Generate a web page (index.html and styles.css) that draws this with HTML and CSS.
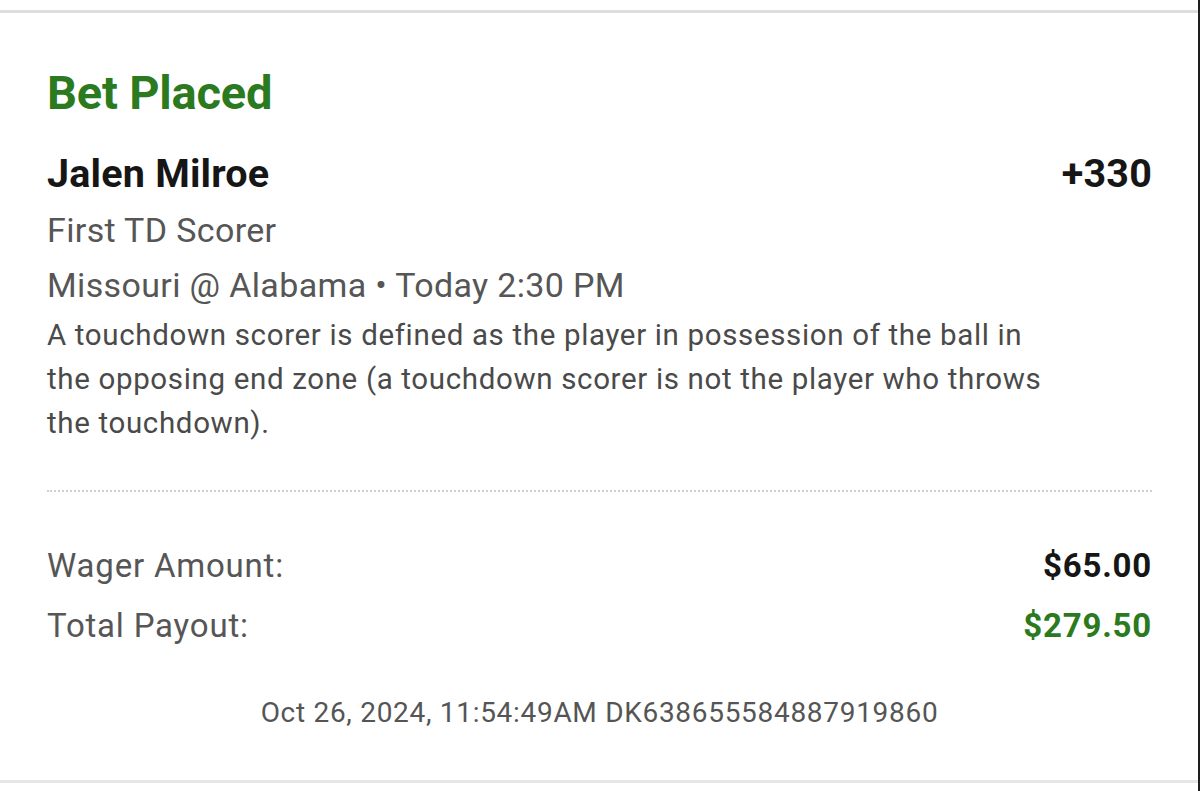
FILE: index.html
```html
<!DOCTYPE html>
<html lang="en">
<head>
<meta charset="utf-8">
<title>Bet Placed</title>
<link rel="stylesheet" href="styles.css">
</head>
<body>
<div class="screen">
  <div class="rule"></div>
  <div class="card">
    <h1 class="title">Bet Placed</h1>
    <div class="row pick">
      <span class="player">Jalen Milroe</span>
      <span class="odds">+330</span>
    </div>
    <div class="meta">First TD Scorer</div>
    <div class="meta">Missouri @ Alabama • Today 2:30 PM</div>
    <p class="desc">A touchdown scorer is defined as the player in possession of the ball in the opposing end zone (a touchdown scorer is not the player who throws the touchdown).</p>
    <div class="dots"></div>
    <div class="row amount">
      <span class="label">Wager Amount:</span>
      <span class="value">$65.00</span>
    </div>
    <div class="row amount">
      <span class="label">Total Payout:</span>
      <span class="value green">$279.50</span>
    </div>
    <div class="footer">Oct 26, 2024, 11:54:49AM DK638655584887919860</div>
  </div>
  <div class="rule bottom"></div>
  <div class="scroll-mark"></div>
</div>
</body>
</html>
```
FILE: styles.css
```css
html, body {
  margin: 0;
  padding: 0;
  background: #fff;
}
.screen {
  position: relative;
  box-sizing: border-box;
  width: 1200px;
  height: 791px;
  overflow: hidden;
  border-right: 2px solid #1e1e1e;
  font-family: Roboto, "Liberation Sans", sans-serif;
  background: #fff;
}
.rule {
  margin-top: 10px;
  height: 3px;
  background: #dedede;
}
.rule.bottom {
  margin-top: 47px;
  background: #e6e6e6;
}
.card {
  padding: 0 46px 0 47px;
}
.title {
  margin: 52px 0 0 0;
  font-size: 47px;
  line-height: 56px;
  letter-spacing: -0.2px;
  font-weight: 700;
  color: #2b7a1f;
}
.row {
  display: flex;
  justify-content: space-between;
  align-items: baseline;
}
.pick {
  margin-top: 31px;
  font-size: 39.5px;
  line-height: 44px;
  letter-spacing: 0.2px;
  font-weight: 700;
  color: #161616;
}
.meta {
  font-size: 34px;
  line-height: 55px;
  letter-spacing: 0.35px;
  color: #565656;
}
.pick + .meta {
  margin-top: 7px;
}
.desc {
  margin: 0;
  max-width: 1010px;
  font-size: 29.5px;
  line-height: 44px;
  letter-spacing: 0.65px;
  color: #4a4a4a;
}
.dots {
  margin-top: 45px;
  height: 0;
  border-top: 2px dotted #cfcfcf;
}
.amount {
  font-size: 33px;
  line-height: 60px;
  letter-spacing: 0.8px;
}
.dots + .amount {
  margin-top: 44px;
}
.label {
  color: #565656;
}
.value {
  font-weight: 700;
  color: #161616;
}
.value.green {
  color: #2b7a1f;
}
.footer {
  margin-top: 37px;
  text-align: center;
  font-size: 28px;
  line-height: 40px;
  letter-spacing: 0.7px;
  color: #555;
}
.scroll-mark {
  position: absolute;
  right: -2px;
  top: 508px;
  width: 2px;
  height: 25px;
  background: #e89b6a;
}
```
